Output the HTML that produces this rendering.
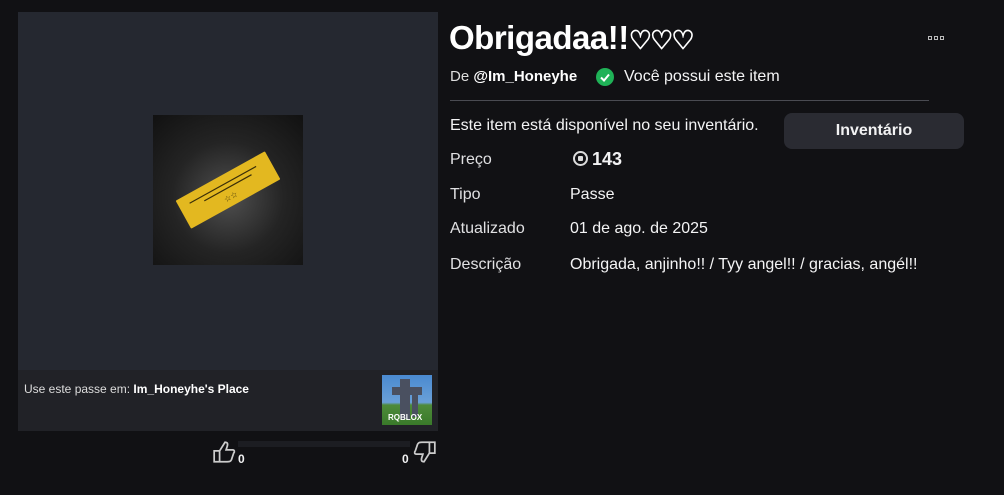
<!DOCTYPE html>
<html><head><meta charset="utf-8"><style>
body{margin:0;width:1004px;height:495px;background:#111114;font-family:"Liberation Sans",sans-serif;color:#f2f2f3;position:relative;overflow:hidden}
.a{position:absolute}
.panel{left:18px;top:12px;width:420px;height:358px;background:#252830}
.strip{left:18px;top:370px;width:420px;height:61px;background:#212227}
.img{left:153px;top:115px;width:150px;height:150px;background:radial-gradient(circle at 50% 55%,#505050 0%,#242424 50%,#111 100%)}
.lbl{font-size:16px;color:#e0e0e2}
.val{font-size:16px;color:#f4f4f5}
</style></head><body>
<div class="a panel"></div>
<div class="a img">
<svg width="150" height="150" viewBox="0 0 150 150">
<g transform="rotate(-29 75 75)">
<rect x="24" y="59" width="102" height="32" rx="1" fill="#e3b820"/>
<line x1="35" y1="68" x2="111" y2="68" stroke="#3a2e08" stroke-width="1.2"/>
<line x1="49" y1="73" x2="103" y2="73" stroke="#3a2e08" stroke-width="1.2"/>
<text x="67" y="85" font-size="8" fill="#3a2e08">☆☆</text>
</g></svg></div>
<div class="a strip"></div>
<div class="a" style="left:24px;top:382px;font-size:12px;color:#ddd">Use este passe em: <b style="color:#fff">Im_Honeyhe's Place</b></div>
<div class="a" style="left:382px;top:375px;width:50px;height:50px;background:linear-gradient(#4a8ad0,#6aa0d8 55%,#4e8a3a 60%,#3a7a2a)">
<div class="a" style="left:18px;top:4px;width:10px;height:40px;background:#4a5060"></div>
<div class="a" style="left:10px;top:12px;width:30px;height:8px;background:#4a5060"></div>
<div class="a" style="left:30px;top:12px;width:6px;height:30px;background:#4a5060"></div>
<div class="a" style="left:6px;top:38px;font-size:8px;font-weight:bold;color:#fff">RQBLOX</div></div>
<div class="a" style="left:238px;top:441px;width:172px;height:6px;background:#1c1d22"></div>
<svg class="a" style="left:212px;top:439px" width="26" height="26" viewBox="0 0 24 24"><path d="M2 11h5v10H2zM7 11l5-8c2 0 3 1 2 4l-1 3h6c2 0 2 2 1 3l-2 6c-1 2-2 2-4 2H7" fill="none" stroke="#ccc" stroke-width="1.6"/></svg>
<div class="a" style="left:238px;top:452px;font-size:12px;font-weight:bold">0</div>
<div class="a" style="left:402px;top:452px;font-size:12px;font-weight:bold">0</div>
<svg class="a" style="left:411px;top:439px" width="26" height="26" viewBox="0 0 24 24"><path d="M22 13h-5V3h5zM17 13l-5 8c-2 0-3-1-2-4l1-3H5c-2 0-2-2-1-3l2-6c1-2 2-2 4-2h7" fill="none" stroke="#ccc" stroke-width="1.6"/></svg>
<div class="a" style="left:449px;top:19px;font-size:33px;font-weight:bold;color:#fff;letter-spacing:-0.5px">Obrigadaa!!<span style="font-size:26px;letter-spacing:-2px">♡♡♡</span></div>
<div class="a" style="left:928px;top:36px;display:flex;gap:2px"><i style="width:4px;height:4px;border:1px solid #bbb;box-sizing:border-box"></i><i style="width:4px;height:4px;border:1px solid #bbb;box-sizing:border-box"></i><i style="width:4px;height:4px;border:1px solid #bbb;box-sizing:border-box"></i></div>
<div class="a" style="left:450px;top:68px;font-size:15px;color:#ddd">De <b style="color:#fff">@Im_Honeyhe</b></div>
<div class="a" style="left:596px;top:68px;width:18px;height:18px;border-radius:50%;background:#1fb257"><svg width="18" height="18"><path d="M5 9.5l3 3 5-6" fill="none" stroke="#fff" stroke-width="2"/></svg></div>
<div class="a val" style="left:624px;top:68px">Você possui este item</div>
<div class="a" style="left:450px;top:100px;width:479px;height:1px;background:#4a4b52"></div>
<div class="a val" style="left:450px;top:117px">Este item está disponível no seu inventário.</div>
<div class="a" style="left:784px;top:113px;width:180px;height:36px;border-radius:8px;background:#2a2b32;font-size:16px;font-weight:bold;text-align:center;line-height:36px">Inventário</div>
<div class="a lbl" style="left:450px;top:151px">Preço</div>
<div class="a" style="left:573px;top:151px;width:11px;height:11px;border:2.5px solid #ddd;border-radius:50%"><div class="a" style="left:3px;top:3px;width:5px;height:5px;background:#ddd;border-radius:1px"></div></div>
<div class="a" style="left:592px;top:149px;font-size:18px;font-weight:bold">143</div>
<div class="a lbl" style="left:450px;top:186px">Tipo</div><div class="a val" style="left:570px;top:186px">Passe</div>
<div class="a lbl" style="left:450px;top:220px">Atualizado</div><div class="a val" style="left:570px;top:220px">01 de ago. de 2025</div>
<div class="a lbl" style="left:450px;top:256px">Descrição</div><div class="a val" style="left:570px;top:256px">Obrigada, anjinho!! / Tyy angel!! / gracias, angél!!</div>
</body></html>
